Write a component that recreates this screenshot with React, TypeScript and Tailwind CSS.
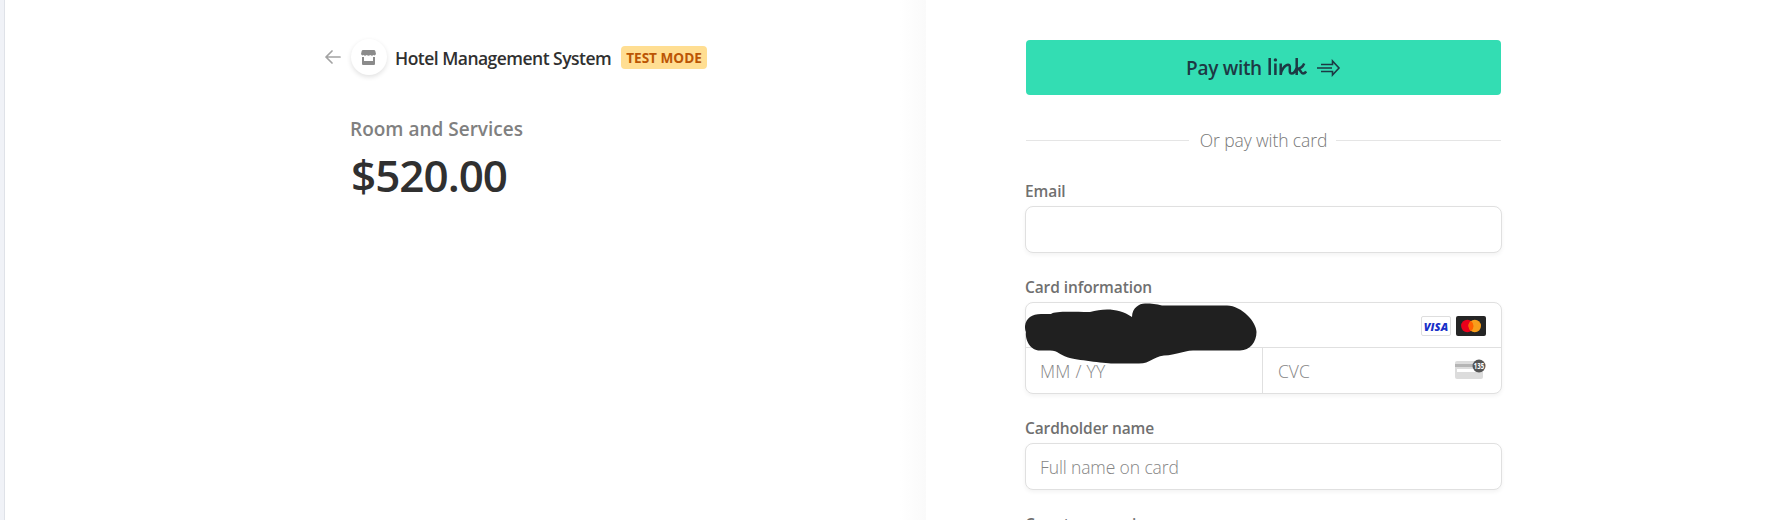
import type { ReactNode } from 'react';

function Label({ children }: { children: ReactNode }) {
  return <div className="h-[22px] whitespace-nowrap text-[15.5px] leading-[22px] font-semibold tracking-[-0.1px] text-[#707070]"><span>{children}</span></div>;
}

const box = 'rounded-lg border border-[#e0e0e0] bg-white shadow-[0_2px_4px_rgba(0,0,0,0.05)]';

function LinkLogo() {
  return (
    <svg width="39" height="18" viewBox="0 0 39 18" fill="none" stroke="#1d3944" strokeWidth="2.5">
      <path d="M1.7 0V17M7.4 5.5V17" />
      <circle cx="7.4" cy="1.9" r="1.7" fill="#1d3944" stroke="none" />
      <path d="M12.7 5.5V17C13 12 17 6.8 20.2 6.8C23.8 6.8 19.8 15.6 23.5 15.6C26 15.6 28 12 29 9M28.7 0V17M36.2 5.5C34.8 8.8 32.5 10.7 29 10.7C33.3 10.7 32.3 15.6 35 15.6C36.5 15.6 37.5 14.7 38.2 13.5" />
    </svg>
  );
}

function LinkArrow() {
  return (
    <svg width="24" height="18" viewBox="0 0 24 18" fill="none" stroke="#1d3944" strokeWidth="1.6">
      <path d="M4 5.5H15.5V2L22 9L15.5 16V12.5H4M0 9H15" />
    </svg>
  );
}

export default function App() {
  return (
    <div className="flex h-[520px] w-[1785px] overflow-hidden bg-white font-['Open_Sans','Noto_Sans',sans-serif]">
      <div className="w-[5px] shrink-0 border-r border-[#dfe2e8] bg-[#f0f2f7]" />
      <section className="flex w-[921px] shrink-0 flex-col bg-[linear-gradient(to_left,#fafafa,#ffffff_26px)] pl-[320px]">
        <div className="mt-[39px] flex h-9 items-center">
          <svg width="16" height="14" viewBox="0 0 16 14" fill="none" stroke="#a3a3a3" strokeWidth="1.7" strokeLinecap="round" strokeLinejoin="round"><path d="M15 7H1M7 1L1 7L7 13" /></svg>
          <div className="ml-[10px] flex size-9 items-center justify-center rounded-full bg-white shadow-[0_2px_5px_rgba(0,0,0,0.12)]">
            <svg className="mr-px" width="15" height="15" viewBox="0 0 15 15" fill="#8b8b8b"><path d="M2 0H13Q14 0 14.3 1L15 4Q14 6.3 12.5 5Q11 6.5 9.3 5Q7.5 6.5 5.7 5Q4 6.5 2.5 5Q1 6.3 0 4L.7 1Q1 0 2 0ZM1 7H3V11H12V7H14V14Q14 15 13 15H2Q1 15 1 14Z" /></svg>
          </div>
          <h1 className="ml-[8px] w-[217px] whitespace-nowrap pt-px text-[17.5px] leading-6 font-semibold tracking-[-0.52px] text-[#303030]"><span>Hotel Management System</span></h1>
          <div className="ml-[9px] flex h-[23px] w-[86px] items-center justify-center rounded bg-[#ffde92] whitespace-nowrap pt-[2px] text-[13.6px] leading-none font-bold text-[#bb5504]"><span>TEST MODE</span></div>
        </div>
        <p className="mt-[40px] ml-[25px] h-7 text-[19px] leading-7 font-semibold text-[#808080]"><span>Room and Services</span></p>
        <p className="mt-[2px] ml-[26px] h-[60px] text-[44px] leading-[60px] font-semibold tracking-[-1px] text-[#303030]"><span>$520.00</span></p>
      </section>
      <section className="ml-[99px] w-[477px] shrink-0 pt-10">
        <button className="mx-px flex h-[55px] w-[475px] items-center justify-center rounded bg-[#33ddb3] pt-[2px] text-[19px] font-semibold tracking-[-0.3px] text-[#1d3944]">
          <span>Pay with</span>
          <span className="mb-[3px] ml-[6px]"><LinkLogo /></span>
          <span className="mb-[2px] ml-[10px]"><LinkArrow /></span>
        </button>
        <div className="mx-px mt-[33px] flex h-6 items-center">
          <div className="h-px w-[163px] bg-[#e5e5e5]" />
          <div className="w-[147px] whitespace-nowrap pl-[2px] text-center text-[17.5px] leading-6 font-light tracking-[-0.1px] text-[#777777]"><span>Or pay with card</span></div>
          <div className="h-px flex-1 bg-[#e5e5e5]" />
        </div>
        <div className="mt-[28px]"><Label>Email</Label></div>
        <div className={`mt-1 h-[47px] ${box}`} />
        <div className="mt-[23px]"><Label>Card information</Label></div>
        <div className={`relative mt-1 h-[92px] ${box} text-[17.5px] font-light text-[#858585]`}>
          <div className="flex h-[45px] items-center justify-end gap-[5px] border-b border-[#e0e0e0] pt-[2px] pr-[15px]">
            <span className="flex h-5 w-[30px] items-center justify-center rounded-[2px] border border-[#dedede] text-[11px] leading-none font-extrabold tracking-[0.1px] text-[#1830c8] italic">VISA</span>
            <svg width="30" height="20" viewBox="0 0 30 20"><rect width="30" height="20" rx="2" fill="#252525" /><circle cx="11.3" cy="10" r="6.2" fill="#eb001b" /><circle cx="18.8" cy="10" r="6.2" fill="#f79e1b" /><path d="M15 5A6.2 6.2 0 0 1 15 15A6.2 6.2 0 0 1 15 5Z" fill="#ff5f00" /></svg>
          </div>
          <div className="flex h-[45px]">
            <div className="flex w-[237px] items-center border-r border-[#e0e0e0] pt-[2px] pl-[14px] tracking-[0.25px]"><span>MM / YY</span></div>
            <div className="flex flex-1 items-center justify-between pt-[2px] pr-[15px] pl-[15px]">
              <span>CVC</span>
              <svg className="mb-1" width="31" height="21" viewBox="0 0 31 21"><rect y="2" width="28" height="18" rx="2" fill="#dcdcdc" /><path d="M0 5H28V8H0Z" fill="#b5b5b5" /><path d="M2 10H20V13H2Z" fill="#fff" /><circle cx="24" cy="7" r="6.5" fill="#555" /><text x="18.8" y="9.9" textLength="10.4" lengthAdjust="spacingAndGlyphs" fontSize="8" fontWeight="700" fill="#fff">135</text></svg>
            </div>
          </div>
          <svg className="absolute -top-px -left-px" width="234" height="64" viewBox="0 0 234 64"><path d="M0 24C1 16 7 12 16 12H26C31 9 44 10 65 10C79 6 94 6 107 15C107 6 114 1.5 120 1.5C127 1.5 131 2 137 3.5H202C217 4 231.5 20 231.5 30C231.5 40 225 48.5 215 48.5H168C157 49 152 53 139 53.5C127 55 126 61.5 114 61.5H88C78 61 52 58 43 55.5C33 52 34 49 25 48.5H15C5 48.5 0 38 1 30C0 28 0 26 0 24Z" fill="#202020" /></svg>
        </div>
        <div className="mt-[23px]"><Label>Cardholder name</Label></div>
        <div className={`mt-1 flex h-[47px] items-center pt-[2px] pl-[14px] ${box} text-[17.5px] font-light tracking-[-0.12px] text-[#858585]`}><span>Full name on card</span></div>
        <div className="mt-[23px]"><Label>Country or region</Label></div>
      </section>
    </div>
  );
}
